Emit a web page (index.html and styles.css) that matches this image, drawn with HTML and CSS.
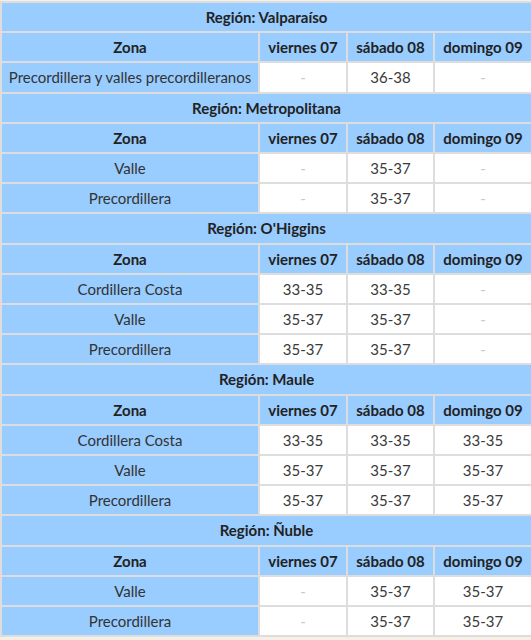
FILE: index.html
```html
<!DOCTYPE html>
<html lang="es">
<head>
<meta charset="utf-8">
<title>Temperaturas</title>
<link rel="stylesheet" href="styles.css">
</head>
<body>
<table class="temps">
  <colgroup>
    <col class="c-zona"><col class="c-vie"><col class="c-sab"><col class="c-dom">
  </colgroup>
  <tbody>
    <tr><th class="region" colspan="4">Región: Valparaíso</th></tr>
    <tr><th>Zona</th><th>viernes 07</th><th>sábado 08</th><th>domingo 09</th></tr>
    <tr><td class="zona">Precordillera y valles precordilleranos</td><td class="na">-</td><td>36-38</td><td class="na">-</td></tr>

    <tr><th class="region" colspan="4">Región: Metropolitana</th></tr>
    <tr><th>Zona</th><th>viernes 07</th><th>sábado 08</th><th>domingo 09</th></tr>
    <tr><td class="zona">Valle</td><td class="na">-</td><td>35-37</td><td class="na">-</td></tr>
    <tr><td class="zona">Precordillera</td><td class="na">-</td><td>35-37</td><td class="na">-</td></tr>

    <tr><th class="region" colspan="4">Región: O'Higgins</th></tr>
    <tr><th>Zona</th><th>viernes 07</th><th>sábado 08</th><th>domingo 09</th></tr>
    <tr><td class="zona">Cordillera Costa</td><td>33-35</td><td>33-35</td><td class="na">-</td></tr>
    <tr><td class="zona">Valle</td><td>35-37</td><td>35-37</td><td class="na">-</td></tr>
    <tr><td class="zona">Precordillera</td><td>35-37</td><td>35-37</td><td class="na">-</td></tr>

    <tr><th class="region" colspan="4">Región: Maule</th></tr>
    <tr><th>Zona</th><th>viernes 07</th><th>sábado 08</th><th>domingo 09</th></tr>
    <tr><td class="zona">Cordillera Costa</td><td>33-35</td><td>33-35</td><td>33-35</td></tr>
    <tr><td class="zona">Valle</td><td>35-37</td><td>35-37</td><td>35-37</td></tr>
    <tr><td class="zona">Precordillera</td><td>35-37</td><td>35-37</td><td>35-37</td></tr>

    <tr><th class="region" colspan="4">Región: Ñuble</th></tr>
    <tr><th>Zona</th><th>viernes 07</th><th>sábado 08</th><th>domingo 09</th></tr>
    <tr><td class="zona">Valle</td><td class="na">-</td><td>35-37</td><td>35-37</td></tr>
    <tr><td class="zona">Precordillera</td><td class="na">-</td><td>35-37</td><td>35-37</td></tr>
  </tbody>
</table>
</body>
</html>
```
FILE: styles.css
```css
html, body {
  margin: 0;
  padding: 0;
  overflow-x: hidden;
  background: #f6efe6;
}

body {
  padding-top: 1px;
  font-family: Lato, "Open Sans", sans-serif;
  font-size: 15px;
  color: #333;
}

.temps {
  width: 533px;
  table-layout: fixed;
  border-collapse: separate;
  border-spacing: 2px;
  background: #dddddd;
}

.c-zona { width: 256px; }
.c-vie { width: 86px; }
.c-sab { width: 85px; }
.c-dom { width: 96px; }

.temps th,
.temps td {
  padding: 4px 0;
  line-height: 20.2px;
  text-align: center;
  white-space: nowrap;
  overflow: hidden;
}

.temps th {
  background: #99ccff;
  font-weight: 700;
  color: #222;
}

.temps td {
  background: #ffffff;
  color: #3a3a3a;
}

.temps td.zona {
  background: #99ccff;
  color: #333;
}

.temps td.na {
  color: #c8c8c8;
}
```
